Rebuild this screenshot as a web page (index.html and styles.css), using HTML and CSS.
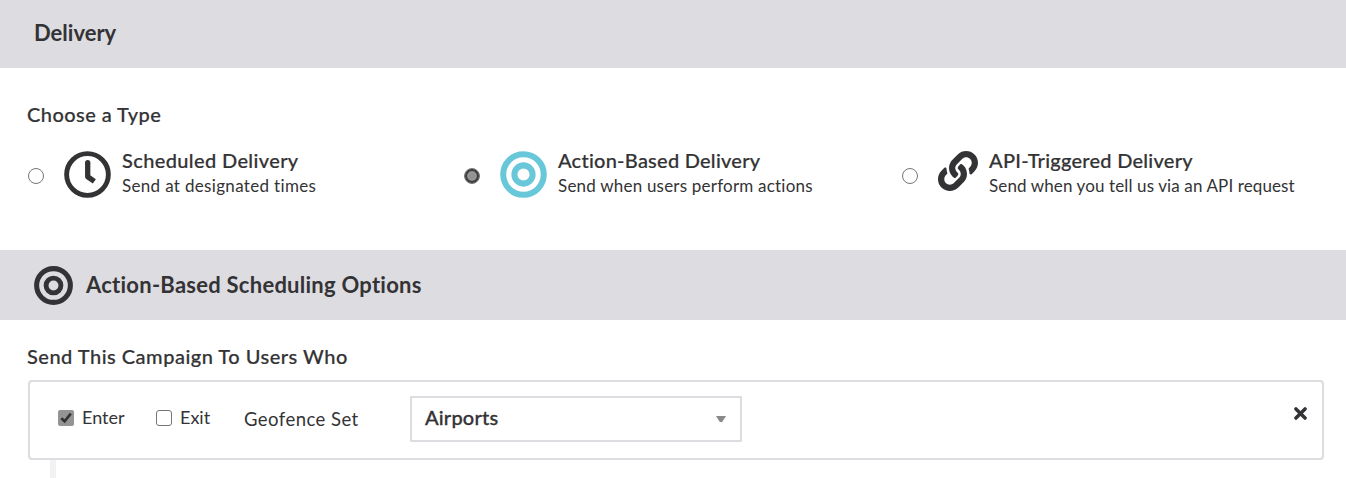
FILE: index.html
```html
<!DOCTYPE html>
<html lang="en">
<head>
<meta charset="utf-8">
<title>Delivery</title>
<link rel="stylesheet" href="styles.css">
</head>
<body>
<header class="bar bar-top"><h1 class="bar-title t-delivery">Delivery</h1></header>
<section class="types">
  <h2 class="label t-choose">Choose a Type</h2>
  <div class="options">
    <label class="option">
      <span class="radio"></span>
      <svg class="icon clock" viewBox="0 0 48 48"><circle cx="24" cy="24" r="21.3" fill="none" stroke="#333335" stroke-width="5"/><path d="M24.200 12.500V26.300L31 31" fill="none" stroke="#333335" stroke-width="5.400" stroke-linejoin="round"/><circle cx="24.200" cy="12" r="2.700" fill="#333335"/></svg>
      <span class="text"><span class="name t-sched">Scheduled Delivery</span><span class="desc d-sched">Send at designated times</span></span>
    </label>
    <label class="option">
      <span class="radio checked"></span>
      <svg class="icon target" viewBox="0 0 48 48"><g fill="none" stroke="#68c8d9"><circle cx="24" cy="24" r="20.700" stroke-width="6.200"/><circle cx="24" cy="24" r="9.300" stroke-width="6.200"/></g></svg>
      <span class="text"><span class="name t-action">Action-Based Delivery</span><span class="desc d-action">Send when users perform actions</span></span>
    </label>
    <label class="option">
      <span class="radio"></span>
      <svg class="icon link" viewBox="0 0 512 512"><path fill="#333335" d="M326.612 185.391c59.747 59.809 58.927 155.698.36 214.590-.11.12-.24.25-.36.37l-67.200 67.200c-59.270 59.270-155.699 59.262-214.960 0-59.270-59.260-59.270-155.700 0-214.960l37.106-37.106c9.840-9.840 26.786-3.300 27.294 10.606.648 17.722 3.826 35.527 9.690 52.721 1.986 5.822.567 12.262-3.783 16.612l-13.087 13.087c-28.026 28.026-28.905 73.660-1.155 101.960 28.024 28.579 74.086 28.749 102.325.510l67.200-67.190c28.191-28.191 28.073-73.757 0-101.830-3.701-3.694-7.429-6.564-10.341-8.569a16.037 16.037 0 0 1-6.947-12.606c-.396-10.567 3.348-21.456 11.698-29.806l21.054-21.055c5.521-5.521 14.182-6.199 20.584-1.731a152.482 152.482 0 0 1 20.522 17.197zM467.547 44.449c-59.261-59.262-155.690-59.270-214.960 0l-67.200 67.200c-.12.12-.25.25-.36.37-58.566 58.892-59.387 154.781.36 214.590a152.454 152.454 0 0 0 20.521 17.196c6.402 4.468 15.064 3.789 20.584-1.731l21.054-21.055c8.350-8.350 12.094-19.239 11.698-29.806a16.037 16.037 0 0 0-6.947-12.606c-2.912-2.005-6.640-4.875-10.341-8.569-28.073-28.073-28.191-73.639 0-101.830l67.200-67.190c28.239-28.239 74.300-28.069 102.325.510 27.750 28.300 26.872 73.934-1.155 101.960l-13.087 13.087c-4.350 4.350-5.769 10.790-3.783 16.612 5.864 17.194 9.042 34.999 9.690 52.721.509 13.906 17.454 20.446 27.294 10.606l37.106-37.106c59.271-59.259 59.271-155.699.001-214.959z"/></svg>
      <span class="text"><span class="name t-api">API-Triggered Delivery</span><span class="desc d-api">Send when you tell us via an API request</span></span>
    </label>
  </div>
</section>
<header class="bar bar-options">
  <svg class="bar-icon" viewBox="0 0 40 40"><g fill="none" stroke="#333335"><circle cx="20" cy="20" r="17.300" stroke-width="5.200"/><circle cx="20" cy="20" r="7.600" stroke-width="5"/></g></svg>
  <h1 class="bar-title t-options">Action-Based Scheduling Options</h1>
</header>
<section class="campaign">
  <h2 class="label t-send">Send This Campaign To Users Who</h2>
  <div class="trigger">
    <label class="check"><svg class="box" viewBox="0 0 16 16"><rect width="16" height="16" rx="2" fill="#949494"/><path d="M3.300 8.200L6.600 11.300L12.800 3.600" fill="none" stroke="#333" stroke-width="2.600"/></svg><span class="t-enter">Enter</span></label>
    <label class="check check-exit"><svg class="box" viewBox="0 0 16 16"><rect x=".5" y=".5" width="15" height="15" rx="2.500" fill="#fff" stroke="#767676"/></svg><span class="t-exit">Exit</span></label>
    <span class="geo t-geo">Geofence Set</span>
    <div class="select"><span class="t-air">Airports</span><svg class="caret" viewBox="0 0 10 6"><path d="M0 0H10L6.200 6H3.800Z" fill="#8a8a8c"/></svg></div>
    <svg class="close" viewBox="0 0 12 12"><path d="M1.800 1.800L10.200 10.200M10.200 1.800L1.800 10.200" stroke="#333335" stroke-width="3.200" stroke-linecap="round"/></svg>
  </div>
  <div class="stem"></div>
</section>
</body>
</html>
```
FILE: styles.css
```css
* { box-sizing: border-box; }
body { margin: 0; background: #fff; color: #333335; font-family: Lato, "Liberation Sans", sans-serif; font-variant-ligatures: none; overflow: hidden; }
h1, h2 { margin: 0; white-space: nowrap; }
.bar { background: #dddce1; display: flex; align-items: center; }
.bar-top { height: 68px; padding: 0 34px 2px; }
.bar-options { height: 70px; padding: 0 34px; gap: 13px; }
.bar-icon { width: 39px; height: 39px; }
.bar-title { font-size: 22px; font-weight: 700; line-height: 26px; }
.types { height: 182px; padding: 34px 27px 0; }
.label { font-size: 20px; font-weight: 500; line-height: 24px; -webkit-text-stroke: 0.2px; }
.options { display: grid; grid-template-columns: 436px 438px 1fr; padding-left: 1px; margin-top: 23px; }
.option { display: flex; white-space: nowrap; }
.radio { width: 16px; height: 16px; border: 1px solid #767676; border-radius: 50%; margin: 19px 20px 0 0; flex: none; }
.radio.checked { background: #949494; border: 1px solid #77777a; box-shadow: inset 0 0 0 2px #3b3b3d; }
.icon { flex: none; width: 47px; height: 47px; margin: 1.500px 11px 0 0; }
.icon.link { width: 40px; height: 40px; margin: 2px 11px 0 0; }
.text { display: flex; flex-direction: column; }
.name { font-size: 20px; font-weight: 500; line-height: 22px; -webkit-text-stroke: 0.2px; }
.desc { font-size: 17px; line-height: 30px; }
.campaign { padding: 24px 22px 0 27px; }
.trigger { display: flex; height: 80px; margin: 12px 0 0 1px; border: 2px solid #dddce1; border-radius: 4px; padding: 14px 15px 0 28px; font-size: 18px; }
.check { display: flex; align-items: center; height: 44px; gap: 8px; width: 98px; }
.check span { padding-bottom: 2px; }
.check-exit { width: 88px; }
.box { width: 16px; height: 16px; }
.geo { font-size: 18.500px; line-height: 47px; width: 166px; }
.select { width: 332px; height: 46px; border: 2px solid #dddce1; border-radius: 1px; display: flex; align-items: center; justify-content: space-between; padding: 0 14px 4px 13px; font-size: 20px; font-weight: 500; -webkit-text-stroke: 0.3px; }
.caret { width: 10px; height: 6px; margin-top: 4px; }
.close { width: 13px; height: 13px; margin: 11px 0 0 auto; }
.stem { width: 6px; height: 18px; margin-left: 23px; background: #f2f2f4; }

.t-delivery { letter-spacing: 0; }
.t-choose { letter-spacing: 0.45px; }
.t-sched { letter-spacing: 0.37px; }
.t-action { letter-spacing: 0.25px; }
.t-api { letter-spacing: 0.25px; }
.d-sched { letter-spacing: 0.33px; }
.d-action { letter-spacing: 0.21px; }
.d-api { letter-spacing: 0.12px; }
.t-options { letter-spacing: 0.25px; }
.t-send { letter-spacing: 0.5px; }
.t-geo { letter-spacing: 0.45px; }
.t-air { letter-spacing: 0.2px; }
```
